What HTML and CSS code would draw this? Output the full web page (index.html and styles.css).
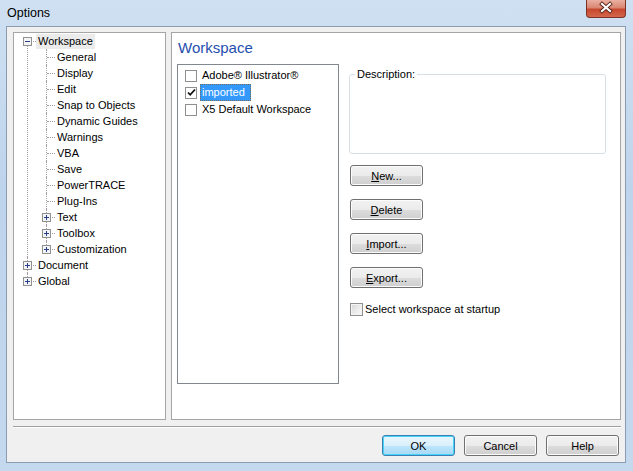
FILE: index.html
```html
<!DOCTYPE html>
<html>
<head>
    <title>Options</title>
    <link rel="stylesheet" href="styles.css">
</head>
<body>
    <div class="window">
        <div class="titlebar">
            <span class="title">Options</span>
            <div class="close">
                <svg width="40" height="18" viewBox="0 0 40 18">
                    <path d="M16 5l8 7M24 5l-8 7" stroke="#5a2418" stroke-width="4" stroke-linecap="square"/>
                    <path d="M16 5l8 7M24 5l-8 7" stroke="#fff" stroke-width="2.2" stroke-linecap="square"/>
                </svg>
            </div>
        </div>
        <div class="body">
            <div class="panels">
                <div class="tree-panel">
                    <ul class="tree">
                        <li>
                            <div class="node">
                                <svg class="exp" width="9" height="9"><rect x="0.5" y="0.5" width="8" height="8" fill="#f4f4f4" stroke="#919191"/><path d="M2 4.5h5" stroke="#27408b"/></svg>
                                <span class="label sel">Workspace</span>
                            </div>
                            <ul>
                                <li><div class="node"><span class="label">General</span></div></li>
                                <li><div class="node"><span class="label">Display</span></div></li>
                                <li><div class="node"><span class="label">Edit</span></div></li>
                                <li><div class="node"><span class="label">Snap to Objects</span></div></li>
                                <li><div class="node"><span class="label">Dynamic Guides</span></div></li>
                                <li><div class="node"><span class="label">Warnings</span></div></li>
                                <li><div class="node"><span class="label">VBA</span></div></li>
                                <li><div class="node"><span class="label">Save</span></div></li>
                                <li><div class="node"><span class="label">PowerTRACE</span></div></li>
                                <li><div class="node"><span class="label">Plug-Ins</span></div></li>
                                <li>
                                    <div class="node">
                                        <svg class="exp" width="9" height="9"><rect x="0.5" y="0.5" width="8" height="8" fill="#f4f4f4" stroke="#919191"/><path d="M2 4.5h5M4.5 2v5" stroke="#27408b"/></svg>
                                        <span class="label">Text</span>
                                    </div>
                                </li>
                                <li>
                                    <div class="node">
                                        <svg class="exp" width="9" height="9"><rect x="0.5" y="0.5" width="8" height="8" fill="#f4f4f4" stroke="#919191"/><path d="M2 4.5h5M4.5 2v5" stroke="#27408b"/></svg>
                                        <span class="label">Toolbox</span>
                                    </div>
                                </li>
                                <li>
                                    <div class="node">
                                        <svg class="exp" width="9" height="9"><rect x="0.5" y="0.5" width="8" height="8" fill="#f4f4f4" stroke="#919191"/><path d="M2 4.5h5M4.5 2v5" stroke="#27408b"/></svg>
                                        <span class="label">Customization</span>
                                    </div>
                                </li>
                            </ul>
                        </li>
                        <li>
                            <div class="node">
                                <svg class="exp" width="9" height="9"><rect x="0.5" y="0.5" width="8" height="8" fill="#f4f4f4" stroke="#919191"/><path d="M2 4.5h5M4.5 2v5" stroke="#27408b"/></svg>
                                <span class="label">Document</span>
                            </div>
                        </li>
                        <li>
                            <div class="node">
                                <svg class="exp" width="9" height="9"><rect x="0.5" y="0.5" width="8" height="8" fill="#f4f4f4" stroke="#919191"/><path d="M2 4.5h5M4.5 2v5" stroke="#27408b"/></svg>
                                <span class="label">Global</span>
                            </div>
                        </li>
                    </ul>
                </div>
                <div class="page">
                    <div class="heading">Workspace</div>
                    <div class="workspace">
                        <div class="list">
                            <div class="item"><span class="cb"></span><span class="itext">Adobe® Illustrator®</span></div>
                            <div class="item">
                                <span class="cb"><svg width="9" height="9" viewBox="0 0 9 9"><path d="M1 4.5l2.2 2.3L8 1.5" fill="none" stroke="#111" stroke-width="1.8"/></svg></span>
                                <span class="itext sel">imported</span>
                            </div>
                            <div class="item"><span class="cb"></span><span class="itext">X5 Default Workspace</span></div>
                        </div>
                        <div class="side">
                            <div class="group">
                                <span class="legend">Description:</span>
                            </div>
                            <div class="btns">
                                <button class="btn"><u>N</u>ew...</button>
                                <button class="btn"><u>D</u>elete</button>
                                <button class="btn"><u>I</u>mport...</button>
                                <button class="btn"><u>E</u>xport...</button>
                            </div>
                            <div class="check-row">
                                <span class="cb3"></span>
                                <span>Select workspace at startup</span>
                            </div>
                        </div>
                    </div>
                </div>
            </div>
            <div class="sep"></div>
            <div class="actions">
                <button class="btn default">OK</button>
                <button class="btn">Cancel</button>
                <button class="btn">Help</button>
            </div>
        </div>
    </div>
</body>
</html>
```

FILE: styles.css
```css
body {
    margin: 0;
    font-family: "Liberation Sans", Arial, sans-serif;
    font-size: 11px;
    color: #000;
    background: #fff;
}
.window {
    width: 633px;
    height: 471px;
    box-sizing: border-box;
    padding: 0 7px 8px 6px;
    display: flex;
    flex-direction: column;
    background: linear-gradient(180deg, #cfe0f2 0%, #bed4ec 40%, #c4d8ee 100%);
}
.titlebar {
    height: 26px;
    display: flex;
    align-items: center;
    padding-left: 1px;
}
.title {
    font-size: 12.5px;
    color: #000;
    margin-top: -1px;
}
.close {
    margin-left: auto;
    align-self: flex-start;
    width: 40px;
    height: 18px;
    box-sizing: border-box;
    border: 1px solid #7c3326;
    border-top: none;
    border-radius: 0 0 4px 4px;
    background: linear-gradient(180deg, #eab0a2 0%, #d98872 45%, #c7482f 55%, #d3674c 100%);
}
.close svg {
    display: block;
    margin: -1px 0 0 -1px;
}
.body {
    flex: 1;
    border: 1px solid #8b9cb2;
    background: #f0f0f0;
    padding: 5px 4px 0 6px;
    display: flex;
    flex-direction: column;
}
.panels {
    display: flex;
    gap: 5px;
    height: 388px;
}
.tree-panel {
    width: 153px;
    box-sizing: border-box;
    border: 1px solid #a5a5a5;
    background: #fff;
}
.page {
    flex: 1;
    box-sizing: border-box;
    border: 1px solid #a5a5a5;
    background: #fff;
    padding: 6px 0 0 5px;
}

/* tree */
.tree, .tree ul {
    list-style: none;
    margin: 0;
    padding: 0;
}
.tree ul {
    padding-left: 19px;
}
.tree li {
    position: relative;
}
.tree li::before {
    content: "";
    position: absolute;
    left: 13px;
    top: 0;
    bottom: 0;
    border-left: 1px dotted #a0a0a0;
}
.tree > li:first-child::before {
    top: 8px;
}
.tree li:last-child::before {
    bottom: auto;
    height: 8px;
}
.node {
    position: relative;
    height: 16px;
    display: flex;
    align-items: center;
    padding-left: 22px;
    white-space: nowrap;
}
.node::before {
    content: "";
    position: absolute;
    left: 14px;
    top: 8px;
    width: 8px;
    border-top: 1px dotted #a0a0a0;
}
.exp {
    position: absolute;
    left: 9px;
    top: 4px;
    z-index: 1;
    display: block;
}
.label {
    padding: 0 2px;
    line-height: 15px;
}
.label.sel {
    background: #ebebeb;
}

/* workspace page */
.heading {
    font-size: 15px;
    line-height: 18px;
    color: #1f4fae;
    padding-left: 1px;
    margin-bottom: 7px;
}
.workspace {
    display: flex;
    gap: 10px;
}
.list {
    width: 162px;
    height: 320px;
    box-sizing: border-box;
    border: 1px solid #828790;
    padding: 2px 0 0 7px;
}
.item {
    height: 17px;
    display: flex;
    align-items: center;
    white-space: nowrap;
}
.cb {
    width: 12px;
    height: 12px;
    box-sizing: border-box;
    border: 1px solid #8e8f8f;
    background: #fff;
    margin-right: 5px;
    display: flex;
    align-items: center;
    justify-content: center;
}
.itext {
    padding: 0;
    line-height: 15px;
}
.itext.sel {
    background: #3399ff;
    color: #fff;
    border: 1px dotted #7a6a50;
    padding: 0 5px 0 1px;
    margin-left: -2px;
}
.side {
    width: 257px;
}
.group {
    margin-top: 10px;
    height: 80px;
    box-sizing: border-box;
    border: 1px solid #d5dfe5;
    border-radius: 3px;
}
.legend {
    display: inline-block;
    margin: -7px 0 0 5px;
    padding: 0 2px;
    background: #fff;
    line-height: 13px;
    vertical-align: top;
}
.btns {
    display: flex;
    flex-direction: column;
    gap: 13px;
    margin-top: 11px;
    padding-left: 1px;
}
.btn {
    width: 73px;
    height: 21px;
    box-sizing: border-box;
    padding: 0;
    font-family: "Liberation Sans", Arial, sans-serif;
    font-size: 11px;
    color: #000;
    border: 1px solid #707070;
    border-radius: 3px;
    background: linear-gradient(180deg, #f2f2f2 0%, #ebebeb 50%, #dddddd 51%, #cfcfcf 100%);
    box-shadow: inset 0 0 0 1px #fcfcfc;
}
.btn u {
    text-underline-offset: 1px;
}
.btn.default {
    border-color: #3c7fb1;
    background: linear-gradient(180deg, #eaf6fd 0%, #d9f0fc 50%, #bee6fd 51%, #a7d9f5 100%);
    box-shadow: inset 0 0 0 1px #48d3fb;
}
.check-row {
    margin-top: 15px;
    display: flex;
    align-items: center;
    gap: 2px;
    padding-left: 1px;
    line-height: 13px;
}
.cb3 {
    width: 13px;
    height: 13px;
    box-sizing: border-box;
    border: 1px solid #8e8f8f;
    background: linear-gradient(135deg, #d6d6d6 0%, #eeeeee 60%, #f8f8f8 100%);
    box-shadow: inset 0 0 0 1px #f4f4f4;
}

/* bottom */
.sep {
    margin-top: 6px;
    border-top: 1px solid #a0a0a0;
    border-bottom: 1px solid #fff;
}
.actions {
    display: flex;
    justify-content: flex-end;
    gap: 9px;
    margin-top: 7px;
    padding-right: 2px;
}
```
